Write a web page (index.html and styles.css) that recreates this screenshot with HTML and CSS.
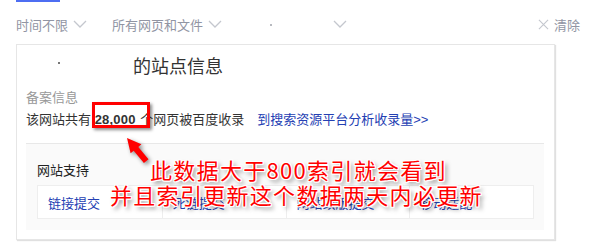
FILE: index.html
```html
<!DOCTYPE html>
<html lang="zh-CN">
<head>
<meta charset="utf-8">
<title>站点信息</title>
<link rel="stylesheet" href="styles.css">
</head>
<body>
<div class="page">
  <div class="tab-line"></div>
  <div class="filters">
    <div class="filter f1"><span>时间不限</span><svg class="chev" viewBox="0 0 14 8"><path d="M1 1 L7 7 L13 1" /></svg></div>
    <div class="filter f2"><span>所有网页和文件</span><svg class="chev" viewBox="0 0 14 8"><path d="M1 1 L7 7 L13 1" /></svg></div>
    <div class="filter f3"><span class="speck"></span><svg class="chev" viewBox="0 0 14 8"><path d="M1 1 L7 7 L13 1" /></svg></div>
    <div class="clear"><svg class="x" viewBox="0 0 12 12"><path d="M1 1 L11 11 M11 1 L1 11" /></svg><span>清除</span></div>
  </div>

  <div class="card">
    <div class="title"><span class="site"><span class="speck dark"></span></span>的站点信息</div>
    <div class="sub">备案信息</div>
    <div class="count">该网站共有 <b class="num">28,000</b> 个网页被百度收录<a class="link" href="#">到搜索资源平台分析收录量&gt;&gt;</a></div>
    <div class="support">
      <div class="support-title">网站支持</div>
      <div class="tools">
        <a class="tool" href="#">链接提交</a>
        <a class="tool" href="#">死链提交</a>
        <a class="tool" href="#">网站改版提交</a>
        <a class="tool" href="#">移动适配</a>
      </div>
    </div>
  </div>

  <div class="hl-box"></div>
  <svg class="arrow" viewBox="0 0 36 34"><polygon points="7,4 21.4,10.3 18.3,12.9 28.5,25.2 23.9,29 13.7,16.7 10.6,19.3"/></svg>
  <div class="note">
    <div class="l1">此数据大于800索引就会看到</div>
    <div class="l2">并且索引更新这个数据两天内必更新</div>
  </div>
</div>
</body>
</html>
```

FILE: styles.css
```css
* { box-sizing: border-box; }
html, body { margin: 0; padding: 0; background: #fff; }
body {
  font-family: Arial, "Liberation Sans", "Noto Sans CJK SC", sans-serif;
  font-size: 13px;
  color: #333;
}
.page { position: relative; width: 606px; height: 252px; overflow: hidden; }

.tab-line { margin-left: 16px; width: 44px; height: 2px; background: #4e6ef2; }

.filters {
  display: flex;
  align-items: center;
  height: 20px;
  margin-top: 12px;
  padding: 0 26px 0 16px;
  color: #9195a3;
  font-size: 13px;
}
.filter { display: flex; align-items: center; gap: 5px; }
.f1 { width: 96px; }
.f2 { width: 158px; }
.f3 { flex: 1; }
.f3 .speck { margin-left: 0; margin-right: 56px; align-self: flex-start; margin-top: 4px; }
.chev { width: 14px; height: 8px; fill: none; stroke: #c4c7ce; stroke-width: 1.3; }
.clear { display: flex; align-items: center; gap: 5px; }
.x { width: 11px; height: 11px; fill: none; stroke: #c4c7ce; stroke-width: 1.2; }

.speck { display: inline-block; width: 2px; height: 2px; background: #b8bac0; }
.speck.dark { background: #777; }

.card {
  margin: 10px 0 0 16px;
  width: 539px;
  border: 1px solid #e6e6e6;
  box-shadow: 1px 1px 1px #e0e0e0;
  padding: 10px 10px 9px 9px;
}
.title { font-size: 18px; line-height: 24px; color: #333; }
.site { display: inline-block; width: 107px; vertical-align: top; padding: 7px 0 0 32px; }
.site .speck { display: block; }
.sub { margin-top: 10px; color: #999; line-height: 18px; }
.count { margin-top: 4px; line-height: 18px; color: #333; }
.num { font-weight: bold; font-size: 13px; margin-right: 1px; letter-spacing: 0.2px; }
.link { margin-left: 13px; color: #2440b3; text-decoration: none; }

.support {
  margin-top: 14px;
  background: #fafafa;
  border-top: 1px solid #e8e8e8;
  padding: 18px 10px 11px 11px;
}
.support-title { line-height: 18px; color: #222; }
.tools {
  margin-top: 5px;
  display: grid;
  grid-template-columns: repeat(4, 1fr);
  background: #fff;
  border: 1px solid #eee;
  height: 34px;
}
.tool {
  display: flex;
  align-items: center;
  padding-left: 10px;
  color: #2440b3;
  text-decoration: none;
  border-left: 1px solid #eee;
}
.tool:first-child { border-left: none; }

.hl-box {
  position: absolute;
  left: 92px; top: 102px;
  width: 58px; height: 26px;
  border: 3px solid #ff0000;
  box-shadow: 2px 2px 3px rgba(0,0,0,0.45);
}
.arrow {
  position: absolute;
  left: 120px; top: 134px;
  width: 36px; height: 34px;
  fill: #ff0000;
  filter: drop-shadow(2px 2px 2px rgba(0,0,0,0.45));
}
.note {
  position: absolute;
  left: 0; top: 157px;
  font-family: "Noto Sans CJK SC", sans-serif;
  font-size: 22px;
  line-height: 25px;
  letter-spacing: 1.3px;
  color: #ff0000;
  text-shadow:
    -1px -1px 0 #fff, 1px -1px 0 #fff, -1px 1px 0 #fff, 1px 1px 0 #fff,
    0 -1px 0 #fff, 0 1px 0 #fff, -1px 0 0 #fff, 1px 0 0 #fff,
    3px 3px 4px rgba(0,0,0,0.5);
  white-space: nowrap;
}
.l1 { padding-left: 150px; }
.l2 { padding-left: 110px; }
```
